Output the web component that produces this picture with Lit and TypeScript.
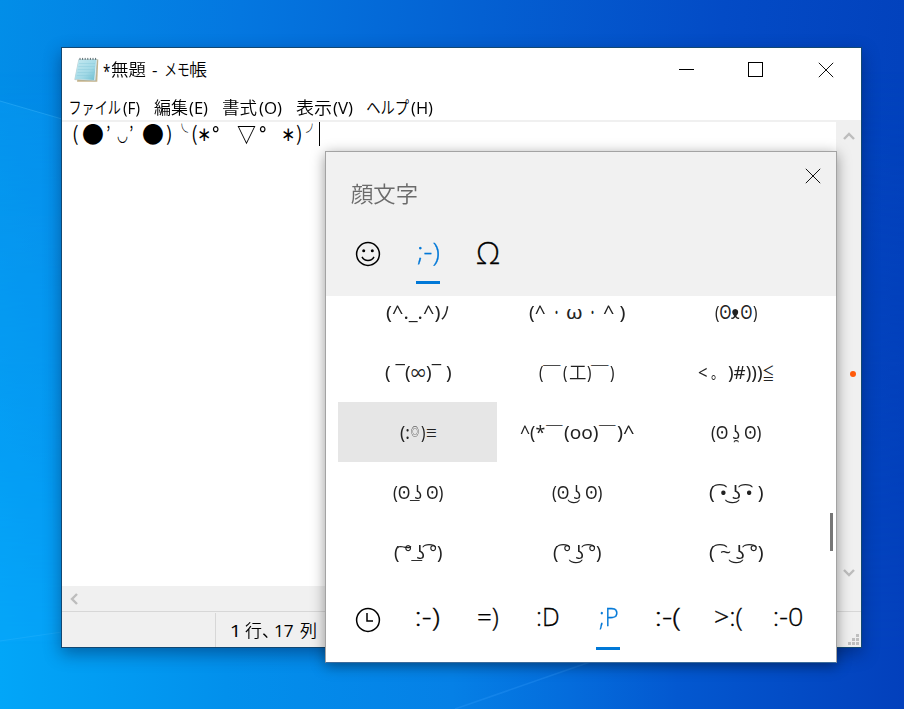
import { LitElement, html, css, svg } from "lit";
import { customElement, property, state } from "lit/decorators.js";
import { classMap } from "lit/directives/class-map.js";

const ruler = document.createElement("canvas").getContext("2d")!;

/** A run of text condensed or widened so that its ink fills a given width. */
@customElement("fit-text")
class FitText extends LitElement {
  @property() text = "";
  @property({ type: Number }) w = 10;
  @property({ type: Number }) size = 0;
  @property({ type: Number }) dy = 0;
  @property({ type: Number }) gap = 0;
  @property({ type: Number }) weight = 0;
  @state() private sx = 1;
  @state() private dx = 0;

  static styles = css`
    :host { display: inline-block; flex: none; white-space: pre; }
    .run { display: inline-block; transform-origin: 0 50%; white-space: pre; }
  `;

  willUpdate() {
    if (this.size) this.style.fontSize = `${this.size}px`;
    if (this.weight) this.style.fontWeight = `${this.weight}`;
    this.style.width = `${this.w}px`;
    this.style.marginLeft = `${this.gap}px`;
    const cs = getComputedStyle(this);
    ruler.font = `${cs.fontWeight} ${cs.fontSize} ${cs.fontFamily}`;
    const m = ruler.measureText(this.text);
    const ink = m.actualBoundingBoxRight + m.actualBoundingBoxLeft;
    this.sx = ink > 0 ? this.w / ink : 1;
    this.dx = m.actualBoundingBoxLeft * this.sx;
  }

  render() {
    return html`<span class="run" style="transform: translate(${this.dx}px, ${this.dy}px) scaleX(${this.sx})">${this.text}</span>`;
  }
}

type Run = { t: string; w: number; gap?: number; size?: number; dy?: number; wt?: number };
const run = (r: Run) =>
  html`<fit-text .text=${r.t} .w=${r.w} .gap=${r.gap ?? 0} .size=${r.size ?? 0} .dy=${r.dy ?? 0} .weight=${r.wt ?? 0}></fit-text>`;

const TITLE: Run[] = [
  { t: "*", w: 7, size: 19, dy: 1, wt: 400 },
  { t: "無題", w: 35, gap: 1 },
  { t: "-", w: 5, gap: 6, wt: 400 },
  { t: "メモ", w: 24, gap: 8 },
  { t: "帳", w: 17, gap: 1 },
];

const MENU: Run[][] = [
  [{ t: "ファイル", w: 51 }, { t: "(F)", w: 17, gap: 2, wt: 400 }],
  [{ t: "編集", w: 34 }, { t: "(E)", w: 19, gap: 1, wt: 400 }],
  [{ t: "書式", w: 35 }, { t: "(O)", w: 23, gap: 2, wt: 400 }],
  [{ t: "表示", w: 35 }, { t: "(V)", w: 20, gap: 2, wt: 400 }],
  [{ t: "ヘルプ", w: 42 }, { t: "(H)", w: 22, gap: 2, wt: 400 }],
];

const EDITOR: Run[] = [
  { t: "(", w: 5 },
  { t: "●", w: 20, gap: 5, size: 23 },
  { t: "’", w: 3, gap: 4 },
  { t: "◡", w: 11, gap: 7, size: 16, dy: 1 },
  { t: "’", w: 3, gap: 2 },
  { t: "●", w: 20, gap: 10, size: 23 },
  { t: ")", w: 5, gap: 3 },
  { t: "╰", w: 7, gap: 10, size: 16, dy: -2 },
  { t: "(", w: 5, gap: 4 },
  { t: "∗", w: 11, gap: 2, wt: 500 },
  { t: "°", w: 7, gap: 2, size: 22, wt: 500 },
  { t: "▽", w: 19, gap: 18, size: 21, wt: 700 },
  { t: "°", w: 7, gap: 3, size: 22, wt: 500 },
  { t: "∗", w: 11, gap: 17, wt: 500 },
  { t: ")", w: 5, gap: 2 },
  { t: "╯", w: 7, gap: 5, size: 16, dy: -2 },
];

const FACES: Run[][] = [
  [{ t: "(^._.^)ﾉ", w: 63 }],
  [{ t: "(^", w: 16 }, { t: "・", w: 3, gap: 10, size: 15 }, { t: "ω", w: 15, gap: 9 }, { t: "・", w: 3, gap: 9, size: 15 }, { t: "^ )", w: 22, gap: 9 }],
  [{ t: "(", w: 4 }, { t: "ʘ", w: 11, gap: 1, size: 20 }, { t: "ᴥ", w: 9 }, { t: "ʘ", w: 11, gap: 1, size: 20 }, { t: ")", w: 4, gap: 1 }],
  [{ t: "( ¯(", w: 25 }, { t: "∞", w: 14, gap: 1, dy: 1 }, { t: ")¯ )", w: 25, gap: 1 }],
  [{ t: "(", w: 4 }, { t: "￣", w: 18, dy: 2 }, { t: "(", w: 4, gap: 2 }, { t: "工", w: 17, gap: 2, wt: 350 }, { t: ")", w: 4, gap: 1 }, { t: "￣", w: 18, dy: 2 }, { t: ")", w: 4, gap: 1 }],
  [{ t: "<", w: 9 }, { t: "。", w: 5, gap: 4 }, { t: ")#)))", w: 34, gap: 12 }, { t: "≦", w: 10, gap: 1, size: 17, dy: 2, wt: 350 }],
  [{ t: "(:", w: 9 }, { t: "◎", w: 8, gap: 2, size: 11 }, { t: ")", w: 4, gap: 2 }, { t: "≡", w: 9, gap: 2, size: 15 }],
  [{ t: "^(*", w: 25 }, { t: "￣", w: 17, gap: 1, dy: 2 }, { t: "(oo)", w: 34, gap: 1 }, { t: "￣", w: 17, gap: 1, dy: 2 }, { t: ")^", w: 17, gap: 1 }],
  [{ t: "(ʘ ʖ̯ ʘ)", w: 50 }],
  [{ t: "(ʘ ͟ʖ ʘ)", w: 50 }],
  [{ t: "(ʘ ͜ʖ ʘ)", w: 50 }],
  [{ t: "( ͡• ͜ʖ ͡• )", w: 54 }],
  [{ t: "( ͠° ͟ʖ ͡°)", w: 48 }],
  [{ t: "( ͡° ͜ʖ ͡°)", w: 48 }],
  [{ t: "( ͡~ ͜ʖ ͡°)", w: 54 }],
];

const MOODS: Run[] = [
  { t: ":-)", w: 22 },
  { t: "=)", w: 20 },
  { t: ":D", w: 21 },
  { t: ";P", w: 19 },
  { t: ":-(", w: 23 },
  { t: ">:(", w: 27 },
  { t: ":-0", w: 27 },
];

const cross = html`<svg width="16" height="16" viewBox="0 0 16 16" fill="none" stroke="#111" stroke-width="1"><path d="M.8.8l14.4 14.4M15.2.8L.8 15.2" /></svg>`;

const notepad = html`<svg width="25" height="26" viewBox="0 0 25 26">
  <defs>
    <linearGradient id="sheet" x1="0" y1="0" x2="1" y2="1">
      <stop offset="0" stop-color="#c6eaf1" /><stop offset=".6" stop-color="#a2d9e6" /><stop offset="1" stop-color="#6bbdd0" />
    </linearGradient>
  </defs>
  <path d="M6 2.5h18.3l-1 22.2H3z" fill="#c9b58a" />
  <path d="M4.8 2.5h18.4l-1.6 21.3L.8 22.6z" fill="#e9f2f2" stroke="#8fa9ad" stroke-width=".5" />
  <path d="M4.8 2.5h17.4l-2 20.6L.9 22z" fill="url(#sheet)" />
  <path d="M5 6.5h16M4.4 9.5h16.4M3.9 12.5h16.5M3.4 15.5h16.7M2.8 18.5h17" stroke="#86c8d8" stroke-width=".4" />
  <path d="M6 .9v2M8.6.9v2M11.2.9v2M13.8.9v2M16.4.9v2M19 .9v2M21.6.9v2" stroke="#596b70" stroke-width="1" />
</svg>`;

const chevron = (d: string) =>
  html`<svg width="12" height="12" viewBox="0 0 12 12" fill="none" stroke="#bdbdbd" stroke-width="2.4"><path d=${d} /></svg>`;

@customElement("app-root")
class AppRoot extends LitElement {
  @state() private picked = 6;
  @state() private mood = 3;

  static styles = css`
    :host {
      display: block; position: relative; width: 904px; height: 709px; overflow: hidden;
      font: 17px/24px "Noto Sans", "Noto Sans CJK JP", "DejaVu Sans", sans-serif; color: #000;
      background: linear-gradient(95deg, #028ee8 0%, #0477e0 25%, #0460d2 50%, #034bc6 75%, #023fba 100%);
    }
    :host::before {
      content: ""; position: absolute; inset: 0;
      background: linear-gradient(90deg, #02a6f8 0%, #0290ec 25%, #0580e6 50%, #046cdc 63%, #0358d0 75%, #0340bc 100%);
      -webkit-mask-image: linear-gradient(180deg, transparent 10%, #000 92%);
      mask-image: linear-gradient(180deg, transparent 10%, #000 92%);
    }
    svg { display: block; }
    .beams { position: absolute; inset: 0; }
    .window {
      position: absolute; left: 61px; top: 47px; width: 799px; height: 599px;
      border: 1px solid #124873; background: #fff; display: flex; flex-direction: column;
      box-shadow: 0 6px 16px rgba(0, 20, 60, .42);
      font-family: "Open Sans", "Noto Sans CJK JP", sans-serif; font-weight: 350;
    }
    .titlebar { height: 44px; display: flex; align-items: center; padding-left: 12px; }
    .titlebar .name { display: flex; margin-left: 4px; font-size: 17px; }
    .controls { margin-left: auto; display: flex; align-items: center; gap: 54px; padding: 0 27px 1px 0; }
    .controls svg:last-child { margin-left: 1px; }
    .menubar { height: 28px; display: flex; gap: 14px; padding-left: 8px; box-sizing: border-box; padding-top: 4px; font-size: 17px; }
    .menu { display: flex; }
    .rule { height: 2px; background: #f0f0f0; }
    .work { flex: 1; display: flex; min-height: 0; }
    .doc { flex: 1; display: flex; align-items: flex-start; padding-left: 11px; font-family: "Noto Sans CJK JP", "DejaVu Sans", sans-serif; font-size: 20px; line-height: 22px; }
    .doc .line { display: flex; height: 24px; }
    .caret { width: 1px; height: 24px; background: #000; margin-left: 6px; }
    .vbar { width: 25px; background: #f0f0f0; display: flex; flex-direction: column; align-items: center; justify-content: space-between; padding: 10px 0 7px; box-sizing: border-box; margin-top: -2px; }
    .marker { width: 6px; height: 6px; border-radius: 50%; background: #ff5a0a; margin-left: 8px; margin-bottom: -39px; }
    .hbar { height: 25px; background: #f0f0f0; display: flex; align-items: center; padding-left: 6px; }
    .status { height: 36px; box-sizing: border-box; border-top: 1px solid #d7d7d7; background: #f0f0f0; display: flex; padding-top: 1px; }
    .status .blank { width: 153px; border-right: 1px solid #d7d7d7; }
    .status .pos { padding: 6px 0 0 15px; display: flex; }
    .status .grip { margin: auto 2px 2px auto; }

    .panel {
      position: absolute; left: 325px; top: 151px; width: 510px; height: 510px; border: 1px solid #a3a3a3; border-bottom-color: #3d6c9c;
      background: #fff; display: flex; flex-direction: column; box-shadow: 0 3px 13px rgba(0, 0, 0, .4);
    }
    .head { height: 144px; background: #f1f1f1; display: flex; flex-direction: column; }
    .caption { display: flex; justify-content: space-between; height: 72px; padding: 0 15px 0 25px; }
    .caption .label { font-size: 22px; font-weight: 350; color: #6b6b6b; padding-top: 28px; font-family: "Noto Sans CJK JP", sans-serif; }
    .caption .close { padding-top: 16px; }
    .tabs { display: flex; padding-left: 12px; font: 300 25px/32px "Open Sans", "Noto Sans", sans-serif; -webkit-text-stroke: .3px currentColor; }
    .tab { width: 60px; height: 60px; display: flex; flex-direction: column; align-items: center; justify-content: space-between; }
    .tab .glyph { height: 53px; display: flex; align-items: center; }
    .foot .glyph { height: 52px; }
    .tab .icon { padding-top: 7px; }
    .tab .bar { width: 24px; height: 3px; }
    .tab.on { color: #0078d7; }
    .tab.on .bar { background: #0078d7; }
    .faces { height: 286px; overflow: hidden; padding-left: 12px; }
    .grid { display: grid; grid-template-columns: repeat(3, 159px); grid-auto-rows: 60px; margin-top: -14px; font-size: 18.5px; color: #222; }
    .face { display: flex; align-items: center; justify-content: center; }
    .face.hot { background: #e6e6e6; }
    .body { position: relative; }
    .thumb { position: absolute; right: 3px; top: 217px; width: 3px; height: 38px; background: #767676; }
    .foot { padding-top: 8px; }
  `;

  private tab(content: unknown, on: boolean, pick?: () => void) {
    return html`<div class=${classMap({ tab: true, on })} @click=${pick}>
      <div class="glyph">${content}</div><div class="bar"></div>
    </div>`;
  }

  render() {
    return html`
      <svg class="beams" width="904" height="709" viewBox="0 0 904 709">
        <path d="M0 101L62 119V640L0 642z" fill="#14a8ff" opacity=".22" />
        <path d="M0 101L62 119" stroke="#4cc0ff" opacity=".35" />
        <path d="M0 641L62 632" stroke="#4cc0ff" opacity=".2" />
        <path d="M455 709L590 662" stroke="#3fa5ff" stroke-width="1.5" opacity=".25" />
      </svg>
      <div class="window">
        <div class="titlebar">
          ${notepad}
          <div class="name">${TITLE.map(run)}</div>
          <div class="controls">
            <svg width="15" height="16"><path d="M0 7.5h15" stroke="#000" /></svg>
            <svg width="15" height="16"><rect x=".5" y=".5" width="14" height="14" fill="none" stroke="#000" /></svg>
            ${cross}
          </div>
        </div>
        <div class="menubar">${MENU.map((m) => html`<div class="menu">${m.map(run)}</div>`)}</div>
        <div class="rule"></div>
        <div class="work">
          <div class="doc"><div class="line">${EDITOR.map(run)}</div><div class="caret"></div></div>
          <div class="vbar">
            ${chevron("M1 9L6 4l5 5")}
            <div class="marker"></div>
            ${chevron("M1 3l5 5 5-5")}
          </div>
        </div>
        <div class="hbar">${chevron("M9 1L4 6l5 5")}</div>
        <div class="status">
          <div class="blank"></div>
          <div class="pos">${[{ t: "1", w: 6, wt: 400 }, { t: "行、", w: 23, gap: 8 }, { t: "17", w: 18, gap: 7, wt: 400 }, { t: "列", w: 16, gap: 7 }].map(run)}</div>
          <svg class="grip" width="11" height="11" fill="#bfbfbf">
            ${[[8, 0], [4, 4], [8, 4], [0, 8], [4, 8], [8, 8]].map(([x, y]) => svg`<rect x=${x} y=${y} width="3" height="3" />`)}
          </svg>
        </div>
      </div>

      <div class="panel">
        <div class="head">
          <div class="caption">
            <div class="label">${run({ t: "顔文字", w: 66 })}</div>
            <div class="close">${cross}</div>
          </div>
          <div class="tabs">
            ${this.tab(html`<svg class="icon" width="26" height="26" viewBox="0 0 26 26" fill="none" stroke="#000" stroke-width="1.5">
              <circle cx="13" cy="13" r="11.4" /><path d="M7 15.8c2.6 4.8 9.4 4.8 12 0" />
              <circle cx="8.7" cy="9.7" r="1.5" fill="#000" stroke="none" /><circle cx="17.3" cy="9.7" r="1.5" fill="#000" stroke="none" />
            </svg>`, false)}
            ${this.tab(run({ t: ";-)", w: 22 }), true)}
            ${this.tab(run({ t: "Ω", w: 22, size: 31, dy: 1 }), false)}
          </div>
        </div>
        <div class="body">
          <div class="faces"><div class="grid">
            ${FACES.map((f, i) => html`<div class=${classMap({ face: true, hot: i === this.picked })} @click=${() => (this.picked = i)}>${f.map(run)}</div>`)}
          </div></div>
          <div class="thumb"></div>
        </div>
        <div class="tabs foot">
          ${this.tab(html`<svg class="icon" width="26" height="26" viewBox="0 0 26 26" fill="none" stroke="#000" stroke-width="1.5">
            <circle cx="13" cy="13" r="11.4" /><path d="M12 6v8h6" />
          </svg>`, false)}
          ${MOODS.map((m, i) => this.tab(run(m), i === this.mood, () => (this.mood = i)))}
        </div>
      </div>
    `;
  }
}
